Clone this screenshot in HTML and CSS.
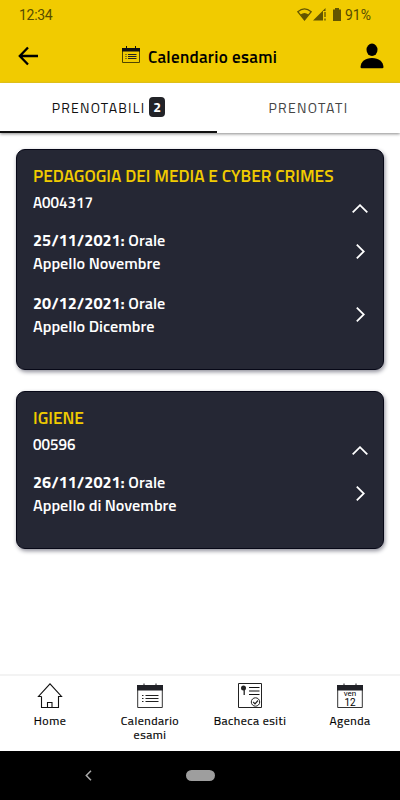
FILE: index.html
```html
<!DOCTYPE html>
<html lang="it">
<head>
    <meta charset="UTF-8">
    <meta name="viewport" content="width=device-width, initial-scale=1.0">
    <title>Calendario esami</title>
    <link rel="stylesheet" href="styles.css">
</head>
<body>
    <header class="header">
        <div class="statusbar">
            <span class="clock">12:34</span>
            <div class="status-icons">
                <svg width="15" height="13" viewBox="0 0 15 13"><path d="M.8 3.700Q7.500-1.800 14.200 3.700L7.500 12Z" fill="none" stroke="#635500" stroke-width="1.200"/><path d="M3.500 6.500Q7.500 3.500 11.500 6.500L7.500 12Z" fill="#635500"/></svg>
                <svg class="signal" width="14" height="13" viewBox="0 0 14 13"><path d="M0 12.500L12.500 0V3H10V12.500Z" fill="#635500"/><path d="M12 4V9M12 10.500V12.500" stroke="#635500" stroke-width="1.300"/></svg>
                <svg class="battery" width="8" height="13" viewBox="0 0 8 13"><path d="M0 1.500H2V0H6V1.500H8V13H0Z" fill="#635500"/></svg>
                <span class="percent">91%</span>
            </div>
        </div>
        <div class="appbar">
            <svg class="back" width="21" height="20" viewBox="0 0 21 20"><path d="M10 1.500L1.800 10L10 18.500M2 10H20" fill="none" stroke="#000" stroke-width="2.300"/></svg>
            <div class="title">
                <svg width="18" height="18" viewBox="0 0 18 18"><path d="M.5 5V16.500H17.500V5" fill="none" stroke="#504500"/><path d="M0 2H18V5.500H0ZM4 0H5V3H4ZM13 0H14V3H13Z" fill="#111"/><path d="M3.500 8.500H4.500M3.500 10.500H4.500M3.500 12.500H4.500M6 8.500H14.500M6 10.500H14.500M6 12.500H14.500" stroke="#222"/></svg>
                <h1>Calendario esami</h1>
            </div>
            <svg class="user" width="24" height="26" viewBox="0 0 24 26"><ellipse cx="12" cy="6.800" rx="5.500" ry="6.200"/><path d="M.5 24C1 18.500 5 15 12 15S23 18.500 23.500 24Q23.500 25.200 22.300 25.200H1.700Q.5 25.200 .5 24Z"/></svg>
        </div>
    </header>

    <div class="tabs">
        <div class="tab active"><span>PRENOTABILI</span><span class="badge">2</span></div>
        <div class="tab"><span>PRENOTATI</span></div>
    </div>

    <main class="content">
        <section class="card">
            <h2>PEDAGOGIA DEI MEDIA E CYBER CRIMES</h2>
            <div class="code-row">
                <span>A004317</span>
                <svg width="16" height="9" viewBox="0 0 16 9"><path d="M.7 8.300L8 1.200L15.300 8.300"/></svg>
            </div>
            <div class="exam">
                <p><b>25/11/2021:</b> Orale<br>Appello Novembre</p>
                <svg width="9" height="15" viewBox="0 0 9 15"><path d="M.8 .7L7.800 7.500L.8 14.300"/></svg>
            </div>
            <div class="exam">
                <p><b>20/12/2021:</b> Orale<br>Appello Dicembre</p>
                <svg width="9" height="15" viewBox="0 0 9 15"><path d="M.8 .7L7.800 7.500L.8 14.300"/></svg>
            </div>
        </section>

        <section class="card">
            <h2>IGIENE</h2>
            <div class="code-row">
                <span>00596</span>
                <svg width="16" height="9" viewBox="0 0 16 9"><path d="M.7 8.300L8 1.200L15.300 8.300"/></svg>
            </div>
            <div class="exam">
                <p><b>26/11/2021:</b> Orale<br>Appello di Novembre</p>
                <svg width="9" height="15" viewBox="0 0 9 15"><path d="M.8 .7L7.800 7.500L.8 14.300"/></svg>
            </div>
        </section>
    </main>

    <nav class="bottom-nav">
        <div class="nav-item">
            <svg width="26" height="27" viewBox="0 0 26 27"><path d="M4.500 13.500V24.500H21.500V13.500H24.500L13 .8L1.500 13.500H4.500M10.500 24.500V19.500H15V24.500" fill="none" stroke="#111" stroke-width="1.100"/></svg>
            <span>Home</span>
        </div>
        <div class="nav-item">
            <svg width="26" height="27" viewBox="0 0 26 27"><path d="M.7 6V24.500H25.300V6" fill="none" stroke="#333"/><path d="M0 2H26V7.500H0ZM6.500 .5H7.500V4H6.500ZM18.500 .5H19.500V4H18.500Z" fill="#202127"/><path d="M5 12.500H6.500M5 15.500H6.500M5 18.500H6.500M8.500 12.500H21.500M8.500 15.500H21.500M8.500 18.500H21.500" stroke="#222"/></svg>
            <span>Calendario<br>esami</span>
        </div>
        <div class="nav-item">
            <svg width="26" height="27" viewBox="0 0 26 27"><path d="M1.500 .5H24.500V24.500H1.500Z" fill="none" stroke="#222"/><circle cx="6.500" cy="5" r="2.500" fill="#222"/><path d="M7.200 5V12" stroke="#222" stroke-width="1.300"/><path d="M12 4.500H22.500M12 8H22.500M12 11.500H22.500" stroke="#111" stroke-width="1.200"/><circle cx="18.500" cy="19" r="4.200" fill="none" stroke="#222"/><path d="M16.200 19L18 20.800L21 17.500" fill="none" stroke="#222" stroke-width="1.200"/></svg>
            <span>Bacheca esiti</span>
        </div>
        <div class="nav-item">
            <svg width="26" height="27" viewBox="0 0 26 27"><path d="M.7 6V24.500H25.300V6" fill="none" stroke="#333"/><path d="M0 2H26V7.500H0ZM6.500 .5H7.500V4H6.500ZM18.500 .5H19.500V4H18.500Z" fill="#202127"/><text class="day" x="13" y="13.400">ven</text><text class="date" x="13" y="23">12</text></svg>
            <span>Agenda</span>
        </div>
    </nav>

    <footer class="system-nav">
        <svg width="7" height="11" viewBox="0 0 7 11"><path d="M6 .8L1.300 5.500L6 10.200" fill="none" stroke="#aaa" stroke-width="1.500"/></svg>
        <div class="pill"></div>
    </footer>
</body>
</html>
```
FILE: styles.css
```css
*{
    box-sizing: border-box;
}
body{
    margin: 0;
    height: 800px;
    display: flex;
    flex-direction: column;
    background-color: #fff;
    color: #000;
    font-family: "Titillium Web", "Noto Sans", sans-serif;
    overflow: hidden;
}
svg{
    display: block;
    flex: none;
}
h1, h2, p{
    margin: 0;
}
.header{
    height: 83px;
    background-color: #f1cb00;
}
.statusbar{
    height: 29px;
    padding: 0 29px 0 19px;
    display: flex;
    justify-content: space-between;
    align-items: center;
    font-family: Roboto, sans-serif;
    font-size: 14px;
    color: #574b00;
}
.clock{
    letter-spacing: -0.3px;
}
.status-icons{
    display: flex;
    align-items: center;
}
.signal{
    margin-left: 1px;
}
.battery{
    margin-left: 6px;
    margin-right: 4px;
}
.appbar{
    height: 54px;
    padding: 0 16px 0 18px;
    display: flex;
    align-items: center;
    justify-content: space-between;
}
.title{
    display: flex;
    align-items: center;
    gap: 8px;
}
.title svg{
    margin-top: -3px;
}
.title h1{
    font-size: 17px;
    line-height: 24px;
    padding-top: 1px;
    font-weight: 600;
    letter-spacing: 0.3px;
}
.tabs{
    height: 50px;
    flex: none;
    display: flex;
    box-shadow: 0 1px 3px #888;
}
.tab{
    width: 183px;
    padding-bottom: 2px;
    display: flex;
    justify-content: center;
    align-items: center;
    font-size: 14px;
    color: #444;
    letter-spacing: 1.3px;
}
.active{
    width: 217px;
    padding-bottom: 0;
    border-bottom: 2px solid #111;
    color: #111;
    letter-spacing: 1.2px;
    gap: 4px;
}
.badge{
    width: 16px;
    height: 20px;
    border-radius: 4px;
    background-color: #222328;
    color: #fff;
    font-size: 14px;
    font-weight: 700;
    line-height: 19px;
    text-align: center;
    letter-spacing: 0;
}
.content{
    flex: 1;
    padding: 16px;
    display: flex;
    flex-direction: column;
    gap: 20px;
}
.card{
    background-color: #252734;
    border: 1px solid #070817;
    border-radius: 9px;
    box-shadow: 1px 2px 4px #8e8e99;
    padding: 13px 15px 31px 16px;
    color: #fff;
}
.card h2{
    font-size: 17.3px;
    line-height: 25px;
    font-weight: 600;
    color: #f1cb00;
}
.code-row{
    height: 30px;
    display: flex;
    justify-content: space-between;
    font-size: 15.2px;
    line-height: 30px;
    font-weight: 600;
}
.code-row svg{
    margin-top: 16px;
}
.exam{
    height: 46px;
    margin-top: 11px;
    display: flex;
    justify-content: space-between;
    align-items: center;
    font-size: 16.2px;
    line-height: 23px;
    font-weight: 600;
}
.exam b{
    font-weight: 700;
}
.exam + .exam{
    margin-top: 17px;
}
.exam svg{
    margin-right: 3px;
    margin-top: -1px;
}
.card path{
    fill: none;
    stroke: #fff;
    stroke-width: 1.8;
}
.card + .card{
    margin-top: 1px;
}
.bottom-nav{
    height: 77px;
    flex: none;
    display: flex;
    border-top: 2px solid #f3f3f3;
    padding-top: 7px;
}
.nav-item{
    width: 100px;
    display: flex;
    flex-direction: column;
    align-items: center;
    gap: 4px;
    font-size: 12px;
    line-height: 14px;
    text-align: center;
    letter-spacing: 0.5px;
    -webkit-text-stroke: 0.2px #000;
}
.day, .date{
    font-family: Roboto, sans-serif;
    font-size: 8px;
    letter-spacing: 0;
    text-anchor: middle;
}
.date{
    font-size: 10px;
}
.system-nav{
    height: 49px;
    flex: none;
    background-color: #000;
    display: flex;
    align-items: center;
    padding-left: 85px;
    gap: 94px;
}
.pill{
    width: 29px;
    height: 11px;
    border-radius: 6px;
    background-color: #9e9e9e;
}
```
